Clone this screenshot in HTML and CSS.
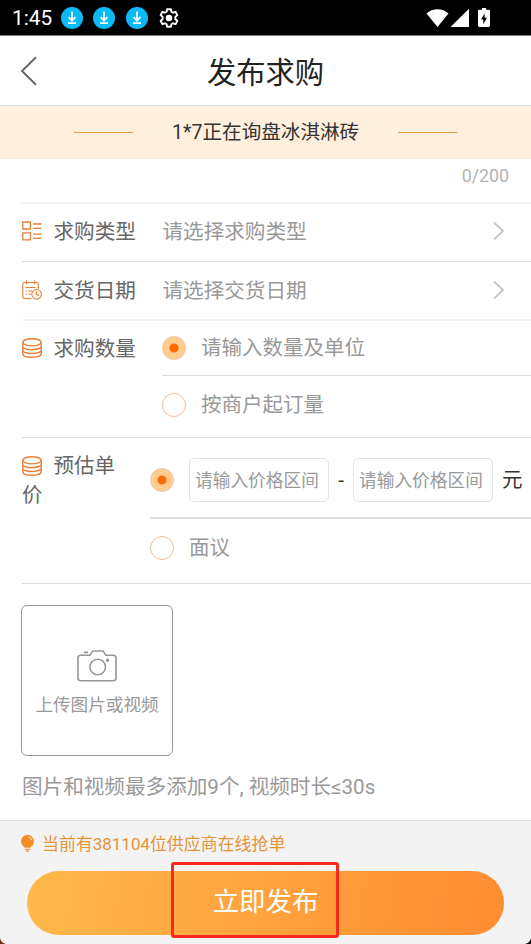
FILE: index.html
```html
<!DOCTYPE html>
<html lang="zh-CN">
<head>
<meta charset="utf-8">
<title>发布求购</title>
<link rel="stylesheet" href="styles.css">
</head>
<body>
<svg class="defs" width="0" height="0">
  <symbol id="download" viewBox="0 0 22 22">
    <circle cx="11" cy="11" r="11" fill="#0abaf9"/>
    <path d="M11 4.500v9M7.500 10l3.500 3.700 3.500-3.700M7 16.200h8" fill="none" stroke="#fff" stroke-width="1.700"/>
  </symbol>
  <symbol id="coins" viewBox="0 0 20 20">
    <g fill="none" stroke="#e87f35" stroke-width="1.400">
      <ellipse cx="10" cy="4.300" rx="9.200" ry="3.600"/>
      <path d="M.8 4.300v11.400c0 4.800 18.400 4.800 18.400 0V4.300M.8 8.200c0 4.600 18.400 4.600 18.400 0M.8 12c0 4.600 18.400 4.600 18.400 0"/>
    </g>
  </symbol>
</svg>
<div class="screen">
  <div class="status">
    <span class="clock">1:45</span>
    <div class="notices">
      <svg width="22" height="22"><use href="#download"/></svg>
      <svg width="22" height="22"><use href="#download"/></svg>
      <svg width="22" height="22"><use href="#download"/></svg>
    </div>
    <svg class="gear" width="20" height="20" viewBox="0 0 20 20">
      <path d="M8.100 1.200h3.800l.5 2.500 1.700 1 2.400-.9 1.900 3.300-2 1.700v2.400l2 1.700-1.900 3.300-2.400-.9-1.700 1-.5 2.500H8.100l-.5-2.500-1.700-1-2.400.9-1.900-3.300 2-1.700V8.800l-2-1.700 1.900-3.300 2.400.9 1.700-1z" fill="none" stroke="#fff" stroke-width="1.900" stroke-linejoin="round"/>
      <circle cx="10" cy="10" r="3.300" fill="#fff"/>
    </svg>
    <svg class="signals" width="66" height="20" viewBox="0 0 66 20">
      <path d="M.5 5.500C6.500-.3 16.500-.3 22.500 5.500L11.500 19zM43 .8V19H24.500z" fill="#fff"/>
      <path d="M56 0h4v1.800h2.600c1 0 1.400.5 1.400 1.400v14.400c0 .9-.5 1.400-1.400 1.400h-9.200c-.9 0-1.400-.5-1.400-1.400V3.200c0-.9.5-1.400 1.400-1.400H56z" fill="#fff"/>
      <path d="M58.600 5.500L55 11.600h2.300v4.600l3.700-6.500h-2.400z" fill="#000"/>
    </svg>
  </div>

  <header class="header">
    <svg class="back" width="18" height="30" viewBox="0 0 18 30"><path d="M16 1.300L2 15l14 13.700" fill="none" stroke="#666" stroke-width="1.900"/></svg>
    <h1>发布求购</h1>
  </header>

  <div class="banner"><i></i><span>1*7正在询盘冰淇淋砖</span><i></i></div>
  <div class="counter">0/200</div>

  <main class="form">
    <div class="row soft">
      <svg class="icon" width="20" height="20" viewBox="0 0 20 20"><path d="M.8 1h7.600v7H.8zM.8 11.800h7.600v7H.8zM11 3h8.500M11 7.300h8.500M11 13.200h8.500M11 17.400h8.500" fill="none" stroke="#e87f35" stroke-width="1.300"/></svg>
      <span class="label">求购类型</span><span class="hint">请选择求购类型</span>
      <svg class="arrow" width="12" height="20" viewBox="0 0 12 20"><path d="M1 1.500l9 8.500-9 8.500" fill="none" stroke="#c6c6c6" stroke-width="1.900"/></svg>
    </div>
    <div class="row">
      <svg class="icon" width="20" height="20" viewBox="0 0 20 20"><g fill="none" stroke="#e87f35" stroke-width="1.100"><path d="M9.500 18.500H2.600Q.8 18.500.8 16.500V4.300Q.8 2.500 2.600 2.500H14.500Q16.300 2.500 16.300 4.300V9M4.500.2v4.300M12.800.2v4.300M7 2.500h3M3.500 7.500h10M3.500 11h1.300M6.300 11h4M3.500 14.200h1.300M6.300 14.200h2.500"/><circle cx="14.600" cy="14.300" r="4.800"/><path d="M14.300 11.300v3.300l2.800 1"/></g></svg>
      <span class="label">交货日期</span><span class="hint">请选择交货日期</span>
      <svg class="arrow" width="12" height="20" viewBox="0 0 12 20"><path d="M1 1.500l9 8.500-9 8.500" fill="none" stroke="#c6c6c6" stroke-width="1.900"/></svg>
    </div>
    <div class="row group soft quantity">
      <div class="title"><svg class="icon" width="20" height="20"><use href="#coins"/></svg><span class="label">求购数量</span></div>
      <div class="options">
        <div class="option"><b class="radio on"></b>请输入数量及单位</div>
        <div class="option"><b class="radio"></b>按商户起订量</div>
      </div>
    </div>
    <div class="row group price">
      <div class="title wrap"><svg class="icon" width="20" height="20"><use href="#coins"/></svg><span>预估单价</span></div>
      <div class="options">
        <div class="option"><b class="radio on"></b><span class="field">请输入价格区间</span><span class="dash">-</span><span class="field">请输入价格区间</span><span class="unit">元</span></div>
        <div class="option"><b class="radio"></b>面议</div>
      </div>
    </div>
    <section class="media">
      <div class="upload">
        <svg width="40" height="32" viewBox="0 0 40 32"><g fill="none" stroke="#979797" stroke-width="1.600"><path d="M3.500 5.300H13L15 1.800Q15.400 1 16.300 1H25.500Q26.400 1 26.800 1.800L28.800 5.300H36.200Q39 5.300 39 8V28Q39 30.700 36.200 30.700H3.800Q1 30.700 1 28V8Q1 5.300 3.500 5.300zM7 2.400h4"/><circle cx="20.700" cy="17" r="7.800"/></g><circle cx="30.500" cy="10.300" r="1.700" fill="#979797"/></svg>
        <span>上传图片或视频</span>
      </div>
      <p>图片和视频最多添加9个, 视频时长≤30s</p>
    </section>
  </main>

  <footer class="footer">
    <div class="tip">
      <svg width="13" height="17" viewBox="0 0 13 17"><path d="M6.500 0a6.300 6.300 0 0 1 3.300 11.700l-.5 1.100H3.700l-.5-1.100A6.300 6.300 0 0 1 6.500 0zM3.900 13.700h5.200v1H3.900zM4.600 15.500h3.800l-.7 1.200H5.300z" fill="#f58c28"/><path d="M7.500 2.200q2.700.3 3.100 3" fill="none" stroke="#ffe2be" stroke-width="1"/></svg>
      <span>当前有381104位供应商在线抢单</span>
    </div>
    <div class="submit">立即发布<div class="highlight"></div></div>
    <i class="corner left"></i><i class="corner right"></i>
  </footer>
</div>
</body>
</html>
```
FILE: styles.css
```css
* { box-sizing: border-box; }
body { margin: 0; background: #fff; font-family: Roboto, "Noto Sans CJK SC", sans-serif; color: #333; }
.defs { position: absolute; }
svg { display: block; flex: none; }
.screen { width: 531px; height: 944px; display: flex; flex-direction: column; overflow: hidden; }

.status { height: 36px; flex: none; background: #000; border-bottom: 1px solid #777; display: flex; align-items: center; padding-left: 12px; }
.clock { width: 49px; color: #fff; font-size: 20.800px; font-weight: 400; line-height: 36px; padding-top: 1px; }
.notices { display: flex; gap: 10.400px; }
.gear { margin-left: 11px; }
.signals { margin: 0 39px 0 auto; }

.header { height: 70px; flex: none; border-bottom: 1px solid #ddd; display: grid; grid-template-columns: 60px 1fr 60px; align-items: center; }
.back { margin-left: 20px; }
h1 { margin: 0; padding-top: 4px; text-align: center; font-size: 29.300px; line-height: 40px; font-weight: 400; color: #222; }
.banner { height: 53px; flex: none; background: #fff0dd; display: flex; align-items: center; justify-content: center; font-size: 19.600px; line-height: 30px; }
.banner i { width: 59px; height: 1px; background: #dc9a45; }
.banner span { width: 187px; margin: 0 39px; white-space: nowrap; }
.counter { height: 43px; flex: none; padding: 6px 22px 0; text-align: right; font-size: 17.800px; line-height: 22px; color: #b3b3b3; }

.form { flex: 1; padding-left: 22px; font-size: 20.500px; color: #999; }
.row { display: flex; align-items: center; height: 59px; padding-bottom: 3px; border-top: 1px solid #ddd; line-height: 28px; }
.row.soft { border-top: 2px solid #f2f2f2; }
.row:nth-child(2) { height: 58px; padding-bottom: 1px; }
.row > .label, .row > .hint { padding-top: 1px; }
.icon { margin-left: -.5px; }
.label { width: 109px; margin-left: 12px; color: #666; white-space: nowrap; font-size: 20.600px; }
.hint { font-size: 20.600px; }
.arrow { margin: 0 26px 0 auto; }
.row.group { align-items: stretch; padding-bottom: 0; }
.row.quantity { height: 118px; }
.row.price { height: 146px; }
.title { width: 140px; flex: none; display: flex; align-items: center; height: 54px; }
.title .label { padding-top: 1px; }
.title.wrap { width: 128px; height: auto; display: block; padding: 14px 30px 0 0; color: #666; line-height: 29px; }
.wrap .icon { display: inline-block; vertical-align: -3px; margin-right: 12px; }
.options { flex: 1; }
.option { display: flex; align-items: center; height: 57px; white-space: nowrap; }
.quantity .option:first-child { height: 55px; border-bottom: 1px solid #ddd; }
.price .option:first-child { height: 81px; padding-top: 5px; border-bottom: 2px solid #dfdfdf; }
.radio { width: 24px; height: 24px; flex: none; border: 1.500px solid #f2bd98; border-radius: 50%; margin-right: 15px; }
.radio.on { border: 1px solid #f4c4a4; background: radial-gradient(circle, #ff6b00 4px, #ffcb8e 5px); }
.field { width: 140px; height: 44px; flex: none; border: 1px solid #e5e5e5; border-radius: 5px; padding-left: 5px; font-size: 17.700px; line-height: 44px; }
.dash { width: 24px; text-align: center; color: #333; }
.unit { margin-left: 9px; color: #333; }

.media { border-top: 1px solid #ddd; padding-top: 21px; }
.upload { width: 152px; height: 151px; margin-left: -1px; border: 1px solid #979797; border-radius: 6px; display: flex; flex-direction: column; align-items: center; padding-top: 44px; font-size: 17.600px; }
.upload span { margin-top: 11px; line-height: 24px; }
.media p { margin: 17px 0 0; line-height: 28px; font-size: 20.600px; }

.footer { position: relative; height: 124px; flex: none; background: #f3f3f3; border-top: 1px solid #ddd; padding: 8px 27px 0; }
.tip { display: flex; align-items: center; gap: 8px; height: 26px; margin-left: -6px; font-size: 16.950px; color: #e79438; }
.tip svg { margin-top: 3px; }
.submit { position: relative; height: 64px; margin-top: 16px; border-radius: 32px; background: linear-gradient(100deg, #ffb94a, #ff8c31); color: #fff; font-size: 26.400px; line-height: 62px; text-align: center; }
.highlight { position: absolute; left: 144px; top: -9px; width: 168px; height: 76px; border: 3px solid #f52a1c; border-radius: 3px; }
.corner { position: absolute; bottom: 0; width: 7px; height: 7px; }
.corner.left { left: 0; background: radial-gradient(circle at 100% 0, transparent 6.500px, #6b2b10 7.500px); }
.corner.right { right: 0; background: radial-gradient(circle at 0 0, transparent 6.500px, #000 7.500px); }
```
